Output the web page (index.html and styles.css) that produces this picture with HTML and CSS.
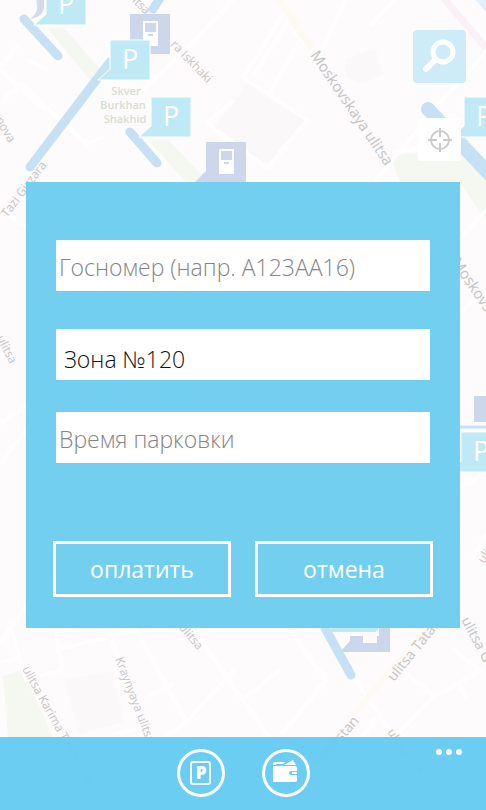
FILE: index.html
```html
<!DOCTYPE html>
<html lang="ru">
<head>
<meta charset="utf-8">
<meta name="viewport" content="width=device-width, initial-scale=1">
<title>Оплата парковки</title>
<link rel="stylesheet" href="styles.css">
</head>
<body>
<svg class="map" viewBox="0 0 486 810" preserveAspectRatio="xMidYMid slice" aria-hidden="true">
  <defs>
    <g id="fuel">
      <path class="fuel-body" d="M0 0h40v40h-51l11-11z"/>
      <path fill="#fff" fill-rule="evenodd" d="M13 7h15v25H13zM15 9v9h11V9zM18 20h5v2h-5z"/>
    </g>
    <g id="parking">
      <path class="parking-body" d="M0 0h40v40h-52L0 29z"/>
      <text class="parking-letter" x="12" y="29">P</text>
    </g>
  </defs>
  <rect width="486" height="810" fill="#fdfbfc"/>
  <g fill="#faf8f9">
    <path d="M249 82l58 39-40 47-54-40z"/>
    <path d="M64 680l48-8 12 50-45 12z"/>
    <path d="M345 60l30-12 8 26-20 10-17-8z"/>
  </g>
  <g fill="#f4f8f1">
    <path d="M47 28l17 0 38 43-11 10z"/>
    <path d="M148 140h20l34 35-4 7h-12z"/>
    <path d="M3 676l20-6 30 67H8z"/>
    <path d="M390 156l70-8 26 30v42l-26-38h-60z"/>
  </g>
  <g class="roads">
    <path d="M0 66l18-20M28 60l20 10M3 100l18-16 66 60 14-6M140 92l46-42 50-54M235 100l-28 22 20 20"/>
    <path d="M243 78l44-70M253 76l34-52 22 24M270 92l26-44M243 78l64 42-40 48-50-38M322 50l28-60M370 26l32-34"/>
    <path d="M374 182l62-74 50-56M393 152l30-4 63-22M0 70l46 40"/>
    <path d="M0 644l12-12 14 48 36-10-6-38M56 650l80-20 50 92 50-54M186 722l-20 15M112 640l30 88M150 696l24-12M0 662l20-4M112 734l30-6"/>
    <path d="M192 628l51 72 26 37M243 700l36-30M290 630l36 50-44 54M351 672l42 65M363 737l12-20M400 668l34 28 47-25-28-22M434 696l-36 38M460 686l7 14"/>
    <path d="M486 210l-26 28M486 292l-26 20M0 424l26-18M0 464l26-34M460 488l26-16M472 560l14-26M0 210l26 16M2 640l24-34"/>
  </g>
  <path d="M276-6l36 54" fill="none" stroke="#fdfbf1" stroke-width="8"/>
  <path d="M440-6l46 54" fill="none" stroke="#f9f1f6" stroke-width="7"/>
  <path d="M350 718l76-88" fill="none" stroke="#fdfaf5" stroke-width="5"/>
  <path d="M474-2l12 14V-2z" fill="#e3effb"/>
  <g class="zones">
    <path d="M24 19l34 37M110 62L30 167M130 132l27 31M162-5l-9 14M325 628l26 47"/>
    <path class="zone-wide" d="M428 109l64 68"/>
    <path d="M460 427h30" stroke-width="3"/>
  </g>
  <path d="M36-5h8v14q-2 8-14 10 8-6 7-12z" fill="#d5daee"/>
  <g class="streets">
    <text transform="translate(125 -6) rotate(46)">alitsa</text>
    <text transform="translate(170 45) rotate(46)">ra Iskhaki</text>
    <text class="street-major" transform="translate(310 55) rotate(56)">Moskovskaya ulitsa</text>
    <text transform="translate(-11 109) rotate(60)">sanova</text>
    <text transform="translate(7 218) rotate(-53)">Tazi Gizzara</text>
    <text transform="translate(-8 329) rotate(63)">a ulitsa</text>
    <text transform="translate(22 669) rotate(61)">ulitsa Karima Tinchurina</text>
    <text transform="translate(115 659) rotate(69)">Kraynyaya ulitsa</text>
    <text transform="translate(172 620) rotate(50)">a ulitsa</text>
    <text class="street-main" transform="translate(394 682) rotate(-51)">ulitsa Tatarstan</text>
    <text class="street-main" transform="translate(319 768) rotate(-49)">Tatarstan</text>
    <text transform="translate(387 732) rotate(57)">ulitsa Saf'yan</text>
    <text class="street-main" transform="translate(461 620) rotate(62)">ulitsa G</text>
    <text class="street-major" transform="translate(451 262) rotate(56)">Moskovskaya</text>
    <text transform="translate(484 564) rotate(-57)">ulitsa</text>
  </g>
  <g class="park-name">
    <text x="126" y="95">Skver</text>
    <text x="123" y="109">Burkhan</text>
    <text x="125" y="123">Shakhid</text>
  </g>
  <use href="#parking" x="46" y="-15"/>
  <use href="#fuel" x="130" y="14"/>
  <use href="#parking" x="110" y="40"/>
  <use href="#parking" x="151" y="97"/>
  <use href="#fuel" x="206" y="142"/>
  <use href="#parking" x="464" y="97"/>
  <path d="M474 396h12v26h-12z" fill="#cdd7ec"/>
  <use href="#parking" x="461" y="432"/>
  <path d="M340 652l10-11v-5h13v7h14v-7h2v-8h11v24z" fill="#cdd7ec"/>
  <path d="M332 628h47l-3 4h-49z" fill="#bfe8f5"/>
</svg>

<main class="screen">
  <button class="tool tool-search" type="button" aria-label="Поиск">
    <svg viewBox="0 0 53 53" width="53" height="53" fill="none" stroke="#fff">
      <circle cx="30" cy="22" r="10" stroke-width="5"/>
      <path d="M22 30L13 39" stroke-width="6" stroke-linecap="round"/>
    </svg>
  </button>
  <button class="tool tool-locate" type="button" aria-label="Моё местоположение">
    <svg viewBox="0 0 43 43" width="43" height="43" fill="none" stroke="#ccc" stroke-width="2">
      <circle cx="22" cy="22" r="9"/>
      <path d="M22 10v9M22 25v9M10 22h9M25 22h9"/>
    </svg>
  </button>
</main>

<nav class="appbar">
  <button class="round" type="button" aria-label="Парковка">
    <svg viewBox="0 0 42 42" width="42" height="42">
      <rect x="11" y="10" width="19" height="22" rx="2" fill="none" stroke="#fff" stroke-width="2"/>
      <text class="round-letter" x="21" y="27">P</text>
    </svg>
  </button>
  <button class="round" type="button" aria-label="Кошелёк">
    <svg viewBox="0 0 42 42" width="42" height="42" fill="#fff">
      <path d="M8 13v-1q0-2 2-2h10l-2 2h-7v1zM19 13l9-5 3 5z"/>
      <path fill-rule="evenodd" d="M8 14h22q2 0 2 2v3h-6q-2 0-2 2t2 2h6v5q0 2-2 2H8z"/>
      <path d="M27 20h5v2h-5z"/>
    </svg>
  </button>
  <button class="more" type="button" aria-label="Ещё">
    <svg viewBox="0 0 28 8" width="28" height="8" fill="#fff">
      <circle cx="4" cy="4" r="3"/><circle cx="14" cy="4" r="3"/><circle cx="24" cy="4" r="3"/>
    </svg>
  </button>
</nav>

<div class="overlay">
  <form class="dialog" role="dialog" aria-label="Оплата парковки">
    <input class="field" type="text" aria-label="Госномер" placeholder="Госномер (напр. А123АА16)">
    <input class="field field-zone" type="text" aria-label="Зона" value="Зона №120">
    <input class="field field-time" type="text" aria-label="Время парковки" placeholder="Время парковки">
    <div class="actions">
      <button class="action" type="button">оплатить</button>
      <button class="action" type="button">отмена</button>
    </div>
  </form>
</div>
</body>
</html>
```

FILE: styles.css
```css
* {
  box-sizing: border-box;
}

body {
  position: relative;
  display: flex;
  flex-direction: column;
  min-height: 100vh;
  margin: 0;
  background: #fdfbfc;
  font-family: "Open Sans", "Noto Sans", sans-serif;
}

button {
  padding: 0;
  border: 0;
  background: none;
  font: inherit;
}

button svg {
  display: block;
}

/* Map */
.map {
  position: absolute;
  inset: 0;
  width: 100%;
  height: 100%;
}

.roads {
  fill: none;
  stroke: #fff;
  stroke-width: 4;
}

.zones {
  fill: none;
  stroke: #c6e1f4;
  stroke-width: 9;
  stroke-linecap: round;
}

.zone-wide {
  stroke-width: 14;
}

.streets {
  fill: #c4c4c4;
  font-size: 12px;
}

.street-main {
  font-size: 14px;
}

.street-major {
  font-size: 15px;
}

.park-name {
  fill: #d8ded4;
  font-size: 11px;
  font-weight: 600;
  text-anchor: middle;
}

.parking-body {
  fill: #c0e9f6;
  stroke: #fff;
  stroke-width: 1;
}

.parking-letter {
  fill: #fff;
  font-size: 27px;
}

.fuel-body {
  fill: #cdd7ec;
}

/* Map tools */
.screen {
  position: relative;
  flex: 1;
  display: flex;
  flex-direction: column;
  align-items: center;
  align-self: flex-end;
  gap: 35px;
  padding: 30px 20px 0;
}

.tool-search {
  border-radius: 4px;
  background: #cdecf8;
}

.tool-locate {
  border-radius: 2px;
  background: #fff;
}

/* Bottom bar */
.appbar {
  position: relative;
  display: flex;
  justify-content: center;
  gap: 37px;
  height: 73px;
  padding-top: 12px;
  background: rgba(100, 202, 241, 0.95);
}

.round {
  width: 48px;
  height: 48px;
  border: 3px solid #fff;
  border-radius: 50%;
}

.round-letter {
  fill: #fff;
  font-size: 17px;
  font-weight: 800;
  text-anchor: middle;
}

.more {
  position: absolute;
  top: 11px;
  right: 23px;
}

/* Payment dialog */
.overlay {
  position: absolute;
  inset: 0;
  display: grid;
  align-items: center;
  padding: 0 26px;
}

.dialog {
  display: flex;
  flex-direction: column;
  padding: 58px 27px 31px;
  background: #72cff0;
}

.field {
  height: 51px;
  margin: 0 3px;
  padding: 2px 3px 0;
  border: 0;
  border-radius: 0;
  background: #fff;
  color: #111;
  font: 300 23px "Open Sans", "Noto Sans", sans-serif;
}

.field::placeholder {
  color: #858585;
  opacity: 1;
}

.field-zone {
  margin-top: 38px;
  padding: 8px 8px 0;
}

.field-time {
  margin-top: 32px;
}

.actions {
  display: grid;
  grid-template-columns: 1fr 1fr;
  gap: 24px;
  margin-top: 78px;
}

.action {
  height: 56px;
  border: 3px solid #fff;
  color: #fff;
  font-size: 23px;
}
```
